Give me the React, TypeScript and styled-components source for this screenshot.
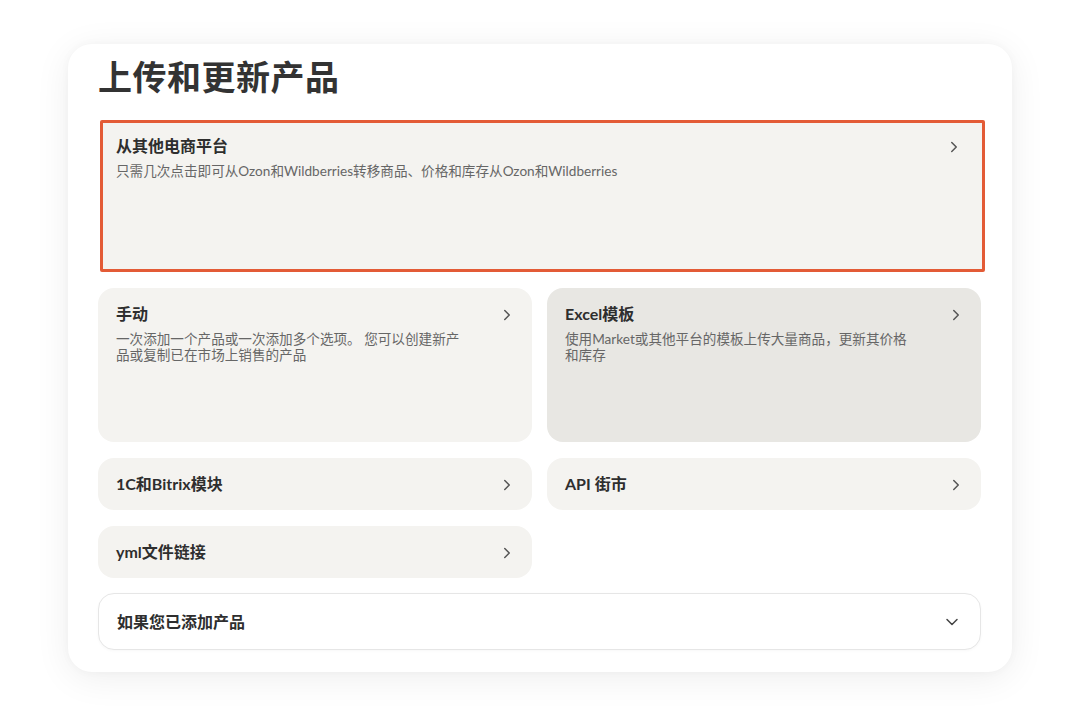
import styled, { createGlobalStyle } from 'styled-components';
import { ChevronRight, ChevronDown } from 'lucide-react';

const GlobalStyle = createGlobalStyle`
  html, body {
    margin: 0;
    padding: 0;
    background: #ffffff;
  }
  body {
    font-family: "Lato", "Noto Sans CJK SC", sans-serif;
    color: #2b2b2b;
  }
`;

type Option = {
  title: string;
  text?: string;
  hover?: boolean;
};

const Page = styled.div`
  padding: 44px 0 44px 68px;
`;

const Panel = styled.div`
  width: 944px;
  box-sizing: border-box;
  padding: 13px 31px 22px 30px;
  background: #ffffff;
  border-radius: 24px;
  box-shadow: 0 6px 36px rgba(0, 0, 0, 0.07), 0 0 10px rgba(0, 0, 0, 0.03);
`;

const Title = styled.h1`
  margin: 0 0 23px;
  font-size: 34px;
  line-height: 40px;
  font-weight: 700;
  color: #333333;
  letter-spacing: 0.5px;
`;

const Grid = styled.div`
  display: grid;
  grid-template-columns: 434px 434px;
  column-gap: 15px;
  row-gap: 16px;
`;

const Card = styled.div<{ $hover?: boolean; $tall?: boolean; $wide?: boolean }>`
  display: flex;
  justify-content: space-between;
  align-items: ${(p) => (p.$tall ? 'flex-start' : 'center')};
  box-sizing: border-box;
  height: ${(p) => (p.$tall ? '154px' : '52px')};
  padding: ${(p) => (p.$tall ? '16px 16px 0 18px' : '0 16px 0 18px')};
  border-radius: 16px;
  background: ${(p) => (p.$hover ? '#e8e7e3' : '#f4f3f0')};
  grid-column: ${(p) => (p.$wide ? '1 / span 2' : 'auto')};
  cursor: pointer;
`;

const Highlight = styled(Card)`
  margin: 0 -4px 0 2px;
  height: 152px;
  padding: 13px 19px 0 13px;
  border-radius: 2px;
  border: 3px solid #e35b36;
`;

const Body = styled.div`
  display: flex;
  flex-direction: column;
  gap: 7px;
`;

const CardTitle = styled.div`
  font-size: 16px;
  line-height: 20px;
  font-weight: 700;
  color: #2e2e2e;
`;

const CardText = styled.div<{ $narrow?: boolean }>`
  font-size: 13.6px;
  line-height: 16px;
  color: #666666;
  max-width: ${(p) => (p.$narrow ? '352px' : 'none')};
`;

const Arrow = styled(ChevronRight)`
  flex-shrink: 0;
  color: #555555;
  margin-top: 2px;
`;

const Accordion = styled.div`
  margin-top: 15px;
  display: flex;
  justify-content: space-between;
  align-items: center;
  height: 57px;
  box-sizing: border-box;
  padding: 0 18px 0 18px;
  border: 1px solid #e6e6e6;
  border-radius: 16px;
  background: #ffffff;
  box-shadow: 0 1px 3px rgba(0, 0, 0, 0.03);
`;

const Down = styled(ChevronDown)`
  color: #444444;
`;

const tallOptions: Option[] = [
  {
    title: '手动',
    text: '一次添加一个产品或一次添加多个选项。 您可以创建新产品或复制已在市场上销售的产品',
  },
  {
    title: 'Excel模板',
    text: '使用Market或其他平台的模板上传大量商品，更新其价格和库存',
    hover: true,
  },
];

const shortOptions: Option[] = [
  { title: '1C和Bitrix模块' },
  { title: 'API 街市' },
  { title: 'yml文件链接' },
];

export default function App() {
  return (
    <>
      <GlobalStyle />
      <Page>
        <Panel>
          <Title>上传和更新产品</Title>
          <Grid>
            <Highlight $tall $wide>
              <Body>
                <CardTitle>从其他电商平台</CardTitle>
                <CardText>
                  只需几次点击即可从Ozon和Wildberries转移商品、价格和库存从Ozon和Wildberries
                </CardText>
              </Body>
              <Arrow size={18} strokeWidth={2} />
            </Highlight>
            {tallOptions.map((o) => (
              <Card key={o.title} $tall $hover={o.hover}>
                <Body>
                  <CardTitle>{o.title}</CardTitle>
                  <CardText $narrow>{o.text}</CardText>
                </Body>
                <Arrow size={18} strokeWidth={2} />
              </Card>
            ))}
            {shortOptions.map((o) => (
              <Card key={o.title}>
                <CardTitle>{o.title}</CardTitle>
                <Arrow size={18} strokeWidth={2} />
              </Card>
            ))}
          </Grid>
          <Accordion>
            <CardTitle>如果您已添加产品</CardTitle>
            <Down size={20} strokeWidth={1.8} />
          </Accordion>
        </Panel>
      </Page>
    </>
  );
}
